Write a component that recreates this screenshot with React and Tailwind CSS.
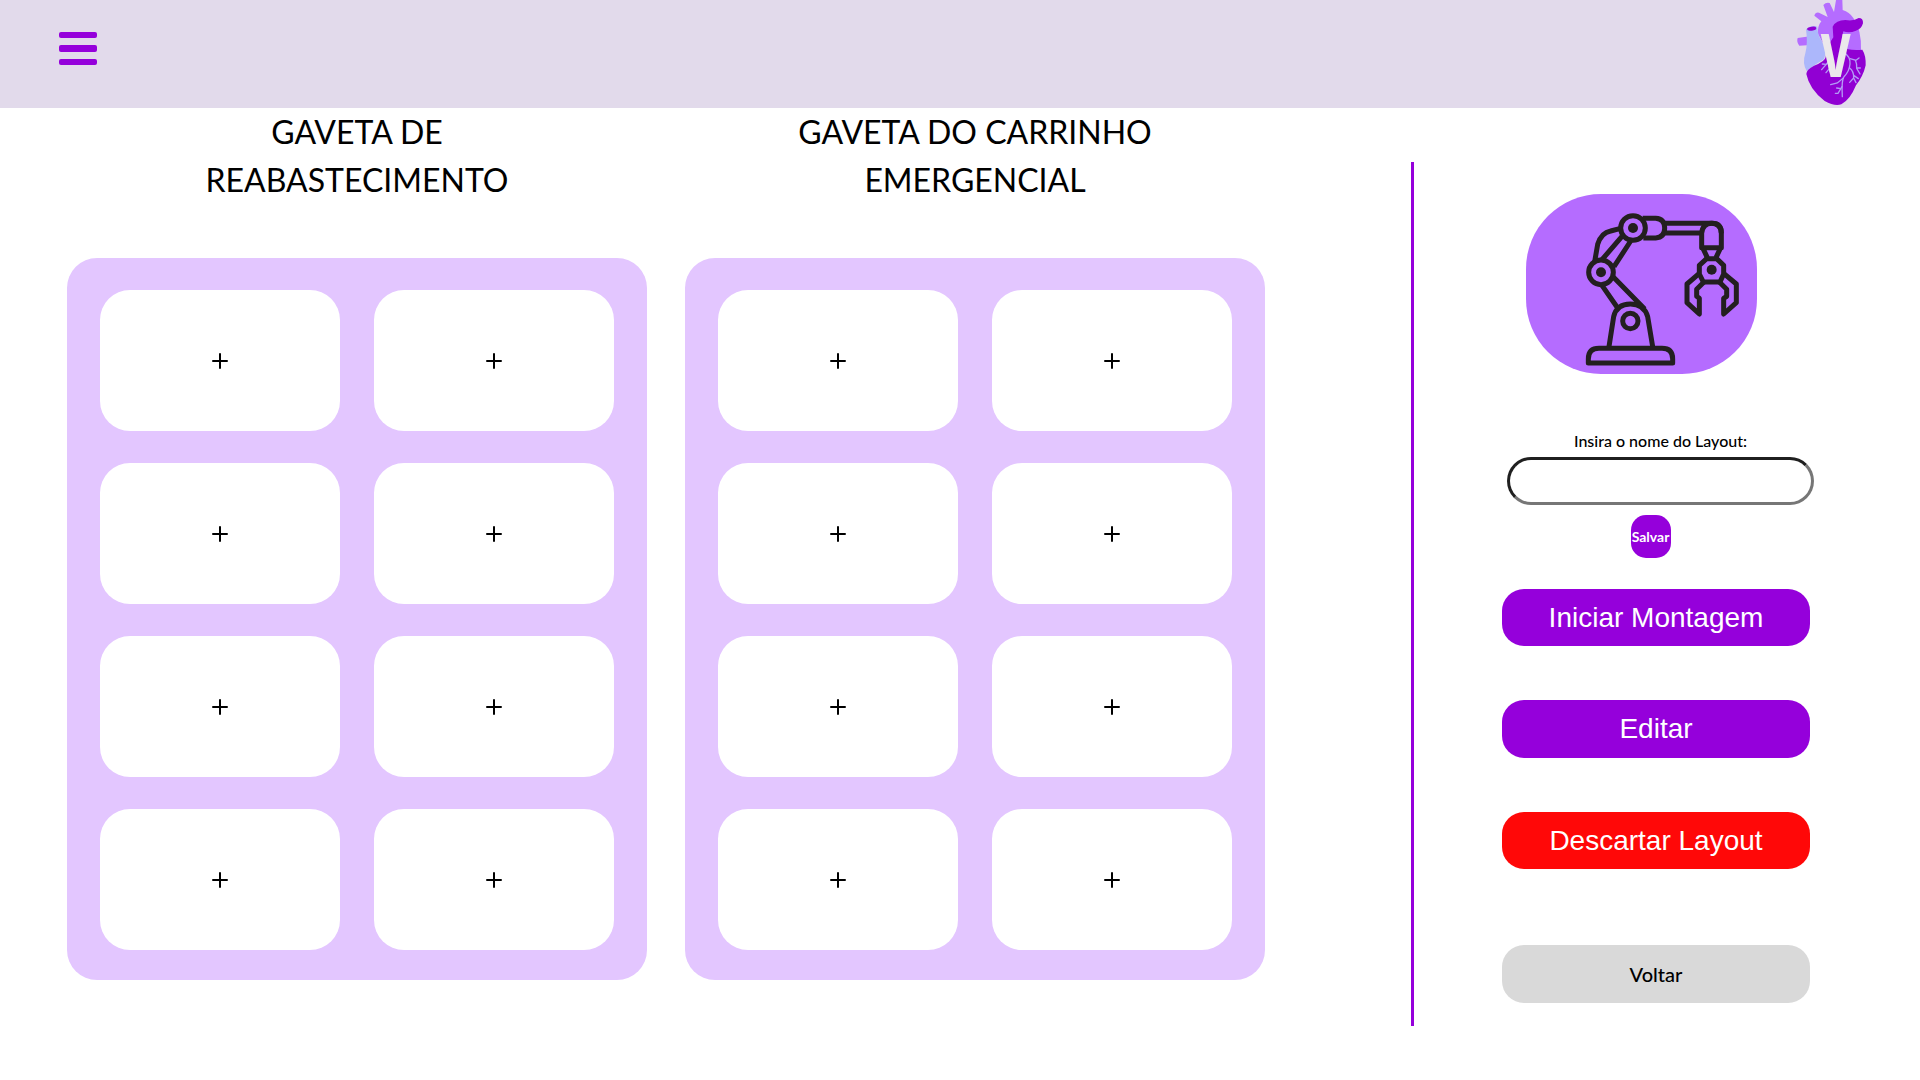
const SLOTS = [1, 2, 3, 4, 5, 6, 7, 8];

function HeartLogo() {
  return (
    <svg viewBox="0 0 300 324" className="h-[108px] w-[100px]" role="img" aria-label="V">
      <path d="M53 114 L90 109 L92 135 L58 137 Q49 126 53 114Z" fill="#b56cff" />
      <path d="M114 102 Q112 78 124 64 L103 47 Q106 36 117 38 L143 51 L130 15 Q138 6 149 9 L162 36 L168 0 H187 L188 30 Q208 36 220 54 Q245 90 243 150 H140Z" fill="#b56cff" />
      <path d="M78 88 Q94 74 112 80 Q113 106 125 123 Q142 150 132 178 Q110 190 80 213 Q66 190 76 160 Q84 130 78 88Z" fill="#acb7fb" />
      <ellipse cx="95" cy="86" rx="14" ry="6" fill="#9100d3" transform="rotate(-8 95 86)" />
      <path d="M158 80 Q168 60 196 60 Q222 64 236 54 Q250 54 249 70 Q244 88 228 92 Q208 100 190 94 Q182 120 190 142 Q204 152 247 149 Q258 166 257 196 Q250 228 228 256 Q210 300 184 313 Q164 320 134 303 Q88 268 79 222 Q80 208 102 197 Q135 185 137 172 Q140 140 160 112Z" fill="#9100d3" />
      <g fill="none" stroke="#b49af6" strokeWidth="4" strokeLinecap="round">
        <path d="M192 158 Q212 170 210 192 Q208 214 192 230 Q184 240 187 290" />
        <path d="M210 176 L226 180 Q232 194 230 205 L240 222 M226 182 L237 174 M230 204 L241 204" />
        <path d="M209 204 Q222 214 221 234 L209 247 M221 234 L228 248 M221 226 L235 236" />
        <path d="M190 234 L172 249 L152 254 M186 260 L174 280 L166 280 M182 266 L170 264" />
        <path d="M150 178 L138 194 L125 209 M139 193 L127 192 M144 187 L150 215 M148 206 L138 218" />
      </g>
      <text x="167" y="232" textAnchor="middle" fontSize="178" fontWeight="700" fill="#ebe8eb" fontFamily="'Liberation Sans Narrow', 'Open Sans Condensed', 'Liberation Sans', sans-serif">V</text>
    </svg>
  );
}

function RobotArm() {
  return (
    <svg viewBox="78 42 693 540" className="h-[180px] w-[231px]" role="img" aria-label="Robô">
      <g fill="none" stroke="#231f20" strokeWidth="15" strokeLinejoin="round">
        <path d="M265 549 V537 Q265 505 297 505 H486 Q518 505 518 537 V549Z" />
        <path d="M327 500 L341 410 Q350 372 391 372 Q432 372 443 410 L458 500" />
        <circle cx="391" cy="423" r="23" />
        <path d="M306 316 L353 384 M340 291 L434 387" />
        <circle cx="303" cy="277" r="37" />
        <path d="M306 239 L366 169 M342 260 L392 183" />
        <path d="M284 245 L293 193 Q304 158 332 153 L362 145" />
        <circle cx="399" cy="144" r="37" />
        <path d="M428 115 H467 Q494 117 494 144 Q494 172 467 174 H430" />
        <path d="M494 130 H636 M494 159 H605" />
        <path d="M605 203 V160 Q608 130 635 130 Q664 130 664 160 V203Z" />
        <path d="M608 203 L622 233 M662 203 L648 233" />
        <path d="M620 236 H650 L671 256 V282 L660 306 H610 L598 282 V256Z" />
        <path d="M598 280 L561 312 V368 L598 402 V355 L590 349 V328 L612 306" />
        <path d="M671 280 L709 312 V368 L671 402 V355 L680 349 V328 L658 306" />
        <path d="M636 130 Q664 130 664 160" />
      </g>
      <g fill="#231f20">
        <circle cx="303" cy="277" r="15" />
        <circle cx="399" cy="144" r="15" />
        <circle cx="635" cy="269" r="15" />
      </g>
    </svg>
  );
}

function Drawer({ title }) {
  return (
    <section className="min-w-0 flex-1">
      <h2 className="px-16 text-center font-['Lato',sans-serif] text-[32px] leading-[48px] text-black">{title}</h2>
      <div className="mt-[54px] grid grid-cols-2 gap-x-[34px] gap-y-8 rounded-[30px] bg-[#e3c6ff] px-[33px] pt-8 pb-[30px]">
        {SLOTS.map((slot) => (
          <button key={slot} type="button" aria-label={`${title} ${slot}`} className="flex h-[141px] items-center justify-center rounded-[30px] bg-white">
            <svg viewBox="0 0 16 16" className="size-4" stroke="#000" strokeWidth="2" strokeLinecap="round" aria-hidden="true">
              <path d="M8 1 V15 M1 8 H15" />
            </svg>
          </button>
        ))}
      </div>
    </section>
  );
}

export default function App() {
  return (
    <div className="min-h-screen bg-white">
      <header className="flex h-[108px] items-start justify-between bg-[#e2daeb] pr-10 pl-[59px]">
        <button type="button" aria-label="Menu" className="mt-8 flex w-[38px] flex-col gap-[7px]">
          <span className="h-[6px] w-full rounded-xs bg-[#9500db]" />
          <span className="h-[7px] w-full rounded-xs bg-[#9500db]" />
          <span className="h-[6px] w-full rounded-xs bg-[#9500db]" />
        </button>
        <HeartLogo />
      </header>

      <main className="flex items-start">
        <div className="flex min-w-0 flex-1 gap-[38px] pr-[146px] pl-[67px]">
          <Drawer title="GAVETA DE REABASTECIMENTO" />
          <Drawer title="GAVETA DO CARRINHO EMERGENCIAL" />
        </div>

        <aside className="mt-[54px] w-[509px] shrink-0 border-l-3 border-[#9500db] pt-8 pr-[106px] pb-[23px] pl-[88px]">
          <div className="mx-6 w-fit rounded-[75px] bg-[#b56cff]">
            <RobotArm />
          </div>
          <form className="mt-[55px] ml-[5px] flex flex-col font-['Lato',sans-serif]" onSubmit={(e) => e.preventDefault()}>
            <label htmlFor="layout-name" className="pb-1 text-center text-[16px] leading-6 font-medium text-black">Insira o nome do Layout:</label>
            <input id="layout-name" type="text" className="h-12 w-full rounded-[24px] border-3 border-t-[#1f1f1f] border-r-[#767676] border-b-[#767676] border-l-[#1f1f1f] bg-white px-4 text-xl outline-none" />
            <button type="submit" className="mt-[10px] mr-5 flex h-[43px] w-10 items-center justify-center self-center rounded-[15px] bg-[#9500db] text-[14px] font-bold text-white">Salvar</button>
          </form>
          <div className="mt-[31px] mr-1 flex flex-col gap-[54px] font-['Liberation_Sans',sans-serif] text-[28px] text-white">
            <button type="button" className="h-[57px] rounded-[22px] bg-[#9500db]">Iniciar Montagem</button>
            <button type="button" className="h-[58px] rounded-[22px] bg-[#9500db]">Editar</button>
            <button type="button" className="h-[57px] rounded-[22px] bg-[#ff0808]">Descartar Layout</button>
          </div>
          <div className="mt-[76px] mr-1 flex flex-col">
            <button type="button" className="h-[58px] rounded-[22px] bg-[#d9d9d9] font-['Lato',sans-serif] text-[20px] font-medium text-black">Voltar</button>
          </div>
        </aside>
      </main>
    </div>
  );
}
